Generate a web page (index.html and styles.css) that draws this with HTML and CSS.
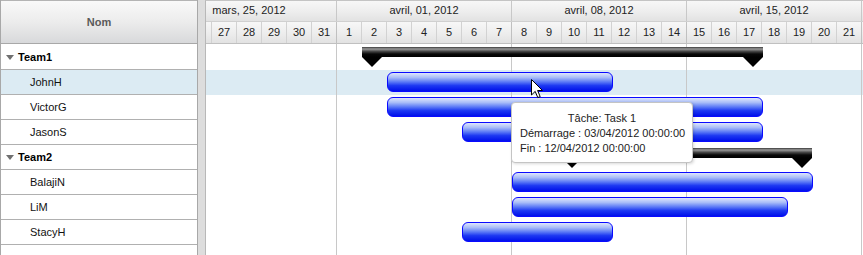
FILE: index.html
```html
<!DOCTYPE html>
<html lang="fr">
<head>
    <meta charset="UTF-8">
    <title>Gantt</title>
    <link rel="stylesheet" href="styles.css">
</head>
<body>

<div class="gantt">
    <!-- Tree grid -->
    <div class="grid-panel">
        <div class="grid-head">Nom</div>
        <div class="grid-row group first"><span class="caret"></span>Team1</div>
        <div class="grid-row child selected">JohnH</div>
        <div class="grid-row child">VictorG</div>
        <div class="grid-row child">JasonS</div>
        <div class="grid-row group"><span class="caret"></span>Team2</div>
        <div class="grid-row child">BalajiN</div>
        <div class="grid-row child">LiM</div>
        <div class="grid-row child">StacyH</div>
    </div>

    <div class="splitter"></div>

    <!-- Chart (scrolled: the cells outside the view are left empty) -->
    <div class="chart-panel">
        <div class="timeline">
            <div class="months">
                <div class="month">mars, 25, 2012</div>
                <div class="month">avril, 01, 2012</div>
                <div class="month">avril, 08, 2012</div>
                <div class="month">avril, 15, 2012</div>
                <div class="month"></div>
            </div>
            <div class="days">
                <div class="day"></div><div class="day"></div><div class="day">27</div><div class="day">28</div><div class="day">29</div><div class="day">30</div><div class="day">31</div>
                <div class="day">1</div><div class="day">2</div><div class="day">3</div><div class="day">4</div><div class="day">5</div><div class="day">6</div><div class="day">7</div>
                <div class="day">8</div><div class="day">9</div><div class="day">10</div><div class="day">11</div><div class="day">12</div><div class="day">13</div><div class="day">14</div>
                <div class="day">15</div><div class="day">16</div><div class="day">17</div><div class="day">18</div><div class="day">19</div><div class="day">20</div><div class="day">21</div>
                <div class="day"></div><div class="day"></div><div class="day"></div><div class="day"></div><div class="day"></div><div class="day"></div><div class="day"></div>
            </div>
            <div class="chart-body">
                <div class="chart-row first"><div class="summary" style="left: 200px; width: 401px;"></div></div>
                <div class="chart-row selected"><div class="task" style="left: 225px; width: 226px;"></div></div>
                <div class="chart-row"><div class="task" style="left: 225px; width: 376px;"></div></div>
                <div class="chart-row"><div class="task" style="left: 300px; width: 301px;"></div></div>
                <div class="chart-row"><div class="summary" style="left: 400px; width: 250px;"></div></div>
                <div class="chart-row"><div class="task" style="left: 350px; width: 301px;"></div></div>
                <div class="chart-row"><div class="task" style="left: 350px; width: 276px;"></div></div>
                <div class="chart-row"><div class="task" style="left: 300px; width: 151px;"></div></div>
            </div>
        </div>

        <!-- Tooltip over the hovered task -->
        <div class="tooltip">
            <div class="tip-title">Tâche: Task 1</div>
            <div>Démarrage : 03/04/2012 00:00:00</div>
            <div>Fin : 12/04/2012 00:00:00</div>
        </div>

        <svg class="cursor" width="13" height="20" viewBox="0 0 13 20">
            <path d="M0.5 0.5 L0.5 16 L4.2 12.4 L6.8 18.6 L9.2 17.6 L6.6 11.5 L11.5 11.5 Z" fill="#fff" stroke="#000" stroke-width="1"/>
        </svg>
    </div>
</div>

</body>
</html>
```

FILE: styles.css
```css
/* Page reset */
html, body {
    margin: 0;
    padding: 0;
    background: #fff;
    overflow: hidden;
    font-family: "Liberation Sans", Arial, sans-serif;
    font-size: 11px;
    color: #000;
}

:root {
    --week-lines: repeating-linear-gradient(to right, transparent 0, transparent 174px, #c8c8c8 174px, #c8c8c8 175px);
}

.gantt {
    display: flex;
    height: 255px;
    width: 863px;
}

/* Left tree grid */
.grid-panel {
    width: 198px;
    flex-shrink: 0;
    box-sizing: border-box;
    border-left: 1px solid #a8a8a8;
    border-right: 1px solid #a8a8a8;
    background: #fff;
}

.grid-head {
    height: 44px;
    box-sizing: border-box;
    border-top: 1px solid #b4b4b4;
    border-bottom: 1px solid #a8a8a8;
    background: linear-gradient(to bottom, #f9f9f9 0%, #ececec 50%, #d8d9db 100%);
    display: flex;
    align-items: center;
    justify-content: center;
    font-weight: bold;
    color: #5a5a5a;
}

.grid-row {
    height: 25px;
    box-sizing: border-box;
    border-bottom: 1px solid #b0b0b0;
    display: flex;
    align-items: center;
    padding-left: 29px;
    color: #111;
}

.grid-row.first {
    height: 26px;
}

.grid-row.group {
    padding-left: 5px;
    font-weight: bold;
    color: #000;
}

.grid-row.selected {
    background: #dcebf3;
}

.caret {
    width: 0;
    height: 0;
    border-left: 4px solid transparent;
    border-right: 4px solid transparent;
    border-top: 5px solid #707070;
    margin-right: 4px;
    margin-top: 1px;
}

/* Splitter between grid and chart */
.splitter {
    width: 7px;
    flex-shrink: 0;
    background: #dddddd;
}

/* Chart */
.chart-panel {
    flex: 1;
    position: relative;
    overflow: hidden;
    border-left: 1px solid #b8b8b8;
    border-top: 1px solid #c4c4c4;
}

.timeline {
    width: 875px;
    margin-left: -44px;
}

.months, .days {
    display: flex;
    background: linear-gradient(to bottom, #f7f7f7 0%, #ededed 55%, #e2e2e2 100%);
    color: #222;
}

.months {
    height: 21px;
    box-sizing: border-box;
    border-bottom: 1px solid #d0d0d0;
}

.month {
    width: 175px;
    flex-shrink: 0;
    box-sizing: border-box;
    border-right: 1px solid #c8c8c8;
    text-align: center;
    line-height: 19px;
    white-space: nowrap;
}

.days {
    height: 22px;
    box-sizing: border-box;
    border-bottom: 1px solid #c0c0c0;
}

.day {
    width: 25px;
    flex-shrink: 0;
    box-sizing: border-box;
    border-right: 1px solid #d2d2d2;
    text-align: center;
    line-height: 21px;
}

.day:nth-child(7n) {
    border-right-color: #c0c0c0;
}

.chart-body {
    height: 220px;
    background: var(--week-lines), #fff;
}

.chart-row {
    position: relative;
    height: 25px;
}

.chart-row.first {
    height: 26px;
}

.chart-row.selected {
    background: var(--week-lines), #dcebf3;
}

/* Task bars */
.task {
    position: absolute;
    top: 2px;
    height: 20px;
    box-sizing: border-box;
    border: 1px solid #0a0aff;
    border-radius: 6px;
    background: linear-gradient(to bottom, #dfe6fb 0%, #a9bdf8 25%, #5a78f6 50%, #1d38f2 70%, #0010ea 100%);
}

/* Summary bars with end markers */
.summary {
    position: absolute;
    top: 3px;
    height: 10px;
    background: linear-gradient(to bottom, #3a3a3a 0%, #9a9a9a 20%, #444 45%, #080808 70%, #000 100%);
}

.summary::before,
.summary::after {
    content: "";
    position: absolute;
    top: 10px;
    width: 0;
    height: 0;
    border-left: 10px solid transparent;
    border-right: 10px solid transparent;
    border-top: 10px solid #000;
}

.summary::before {
    left: 0;
}

.summary::after {
    right: 0;
}

/* Tooltip */
.tooltip {
    position: absolute;
    left: 305px;
    top: 101px;
    width: 182px;
    height: 61px;
    box-sizing: border-box;
    padding: 8px 0 0 8px;
    background: #fff;
    border: 1px solid #c4c4c4;
    border-radius: 4px;
    box-shadow: 1px 1px 3px rgba(0, 0, 0, 0.15);
    line-height: 15px;
    color: #222;
    white-space: nowrap;
    z-index: 5;
}

.tip-title {
    text-align: center;
    padding-right: 8px;
}

.cursor {
    position: absolute;
    left: 325px;
    top: 78px;
    z-index: 6;
}
```
